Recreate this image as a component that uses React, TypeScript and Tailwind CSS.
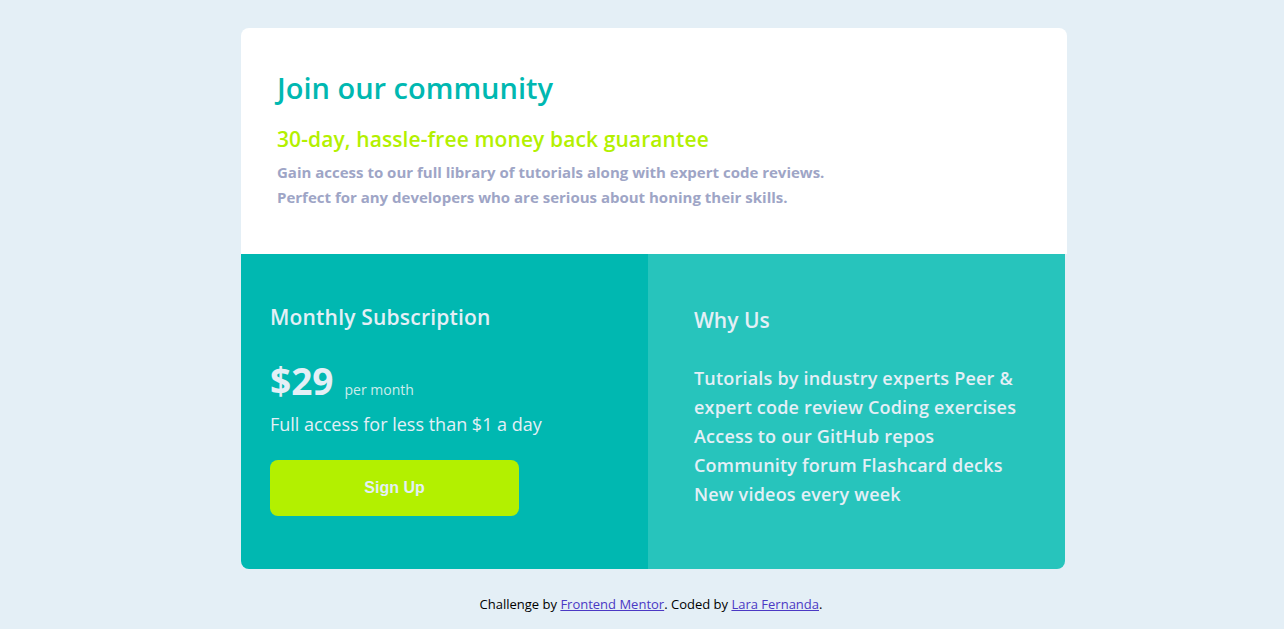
const features = [
  "Tutorials by industry experts",
  "Peer & expert code review",
  "Coding exercises",
  "Access to our GitHub repos",
  "Community forum",
  "Flashcard decks",
  "New videos every week",
];

export default function App() {
  return (
    <div className="min-h-screen bg-[#e4eff6] font-['Open_Sans',sans-serif]">
      <div className="pt-[28px] flex flex-col items-center">
        <main className="ml-[24px] w-[826px] rounded-lg overflow-hidden">
          <section className="bg-white pl-9 pr-9 pt-[40px] h-[226px]">
            <h1 className="text-[29px] leading-[40px] font-semibold text-[#00b8b1]">Join our community</h1>
            <h2 className="mt-[16px] text-[21px] leading-[30px] font-semibold tracking-[0.1px] text-[#b3f000]">
              30-day, hassle-free money back guarantee
            </h2>
            <p className="mt-[6px] text-[15px] leading-[25px] font-bold text-[#9ea5c6] w-[560px]">
              Gain access to our full library of tutorials along with expert code reviews. Perfect for any developers
              who are serious about honing their skills.
            </p>
          </section>
          <div className="grid grid-cols-[407px_1fr] h-[315px]">
            <section className="bg-[#00b8b1] pl-[29px] pt-[49px] text-[#e4eff6]">
              <h3 className="text-[21px] leading-[28px] font-semibold tracking-[0.2px]">Monthly Subscription</h3>
              <div className="mt-[28px] flex items-baseline gap-[11px]">
                <span className="text-[37px] leading-[44px] font-bold">$29</span>
                <span className="text-[14px] text-[#cdeceb]">per month</span>
              </div>
              <p className="mt-[7px] text-[18px] leading-[28px]">Full access for less than $1 a day</p>
              <button className="mt-[22px] h-[56px] w-[249px] rounded-lg bg-[#b3f000] font-['Liberation_Sans',sans-serif] text-[16px] font-bold text-[#e4eff6]">
                Sign Up
              </button>
            </section>
            <section className="bg-[#27c4bc] pl-[46px] pt-[52px] text-[#e4eff6] mr-[2px] rounded-br-lg">
              <h3 className="text-[21px] leading-[28px] font-semibold">Why Us</h3>
              <ul className="mt-[30px] w-[330px] text-[18px] leading-[29px] font-semibold tracking-[0.2px]">
                {features.map((f) => (
                  <li key={f} className="inline">
                    {f}{" "}
                  </li>
                ))}
              </ul>
            </section>
          </div>
        </main>
        <footer className="ml-[18px] mt-[26px] text-[13px] text-black">
          Challenge by{" "}
          <a href="#" className="underline text-[#4b39c4]">
            Frontend Mentor
          </a>
          . Coded by{" "}
          <a href="#" className="underline text-[#4b39c4]">
            Lara Fernanda
          </a>
          .
        </footer>
      </div>
    </div>
  );
}
